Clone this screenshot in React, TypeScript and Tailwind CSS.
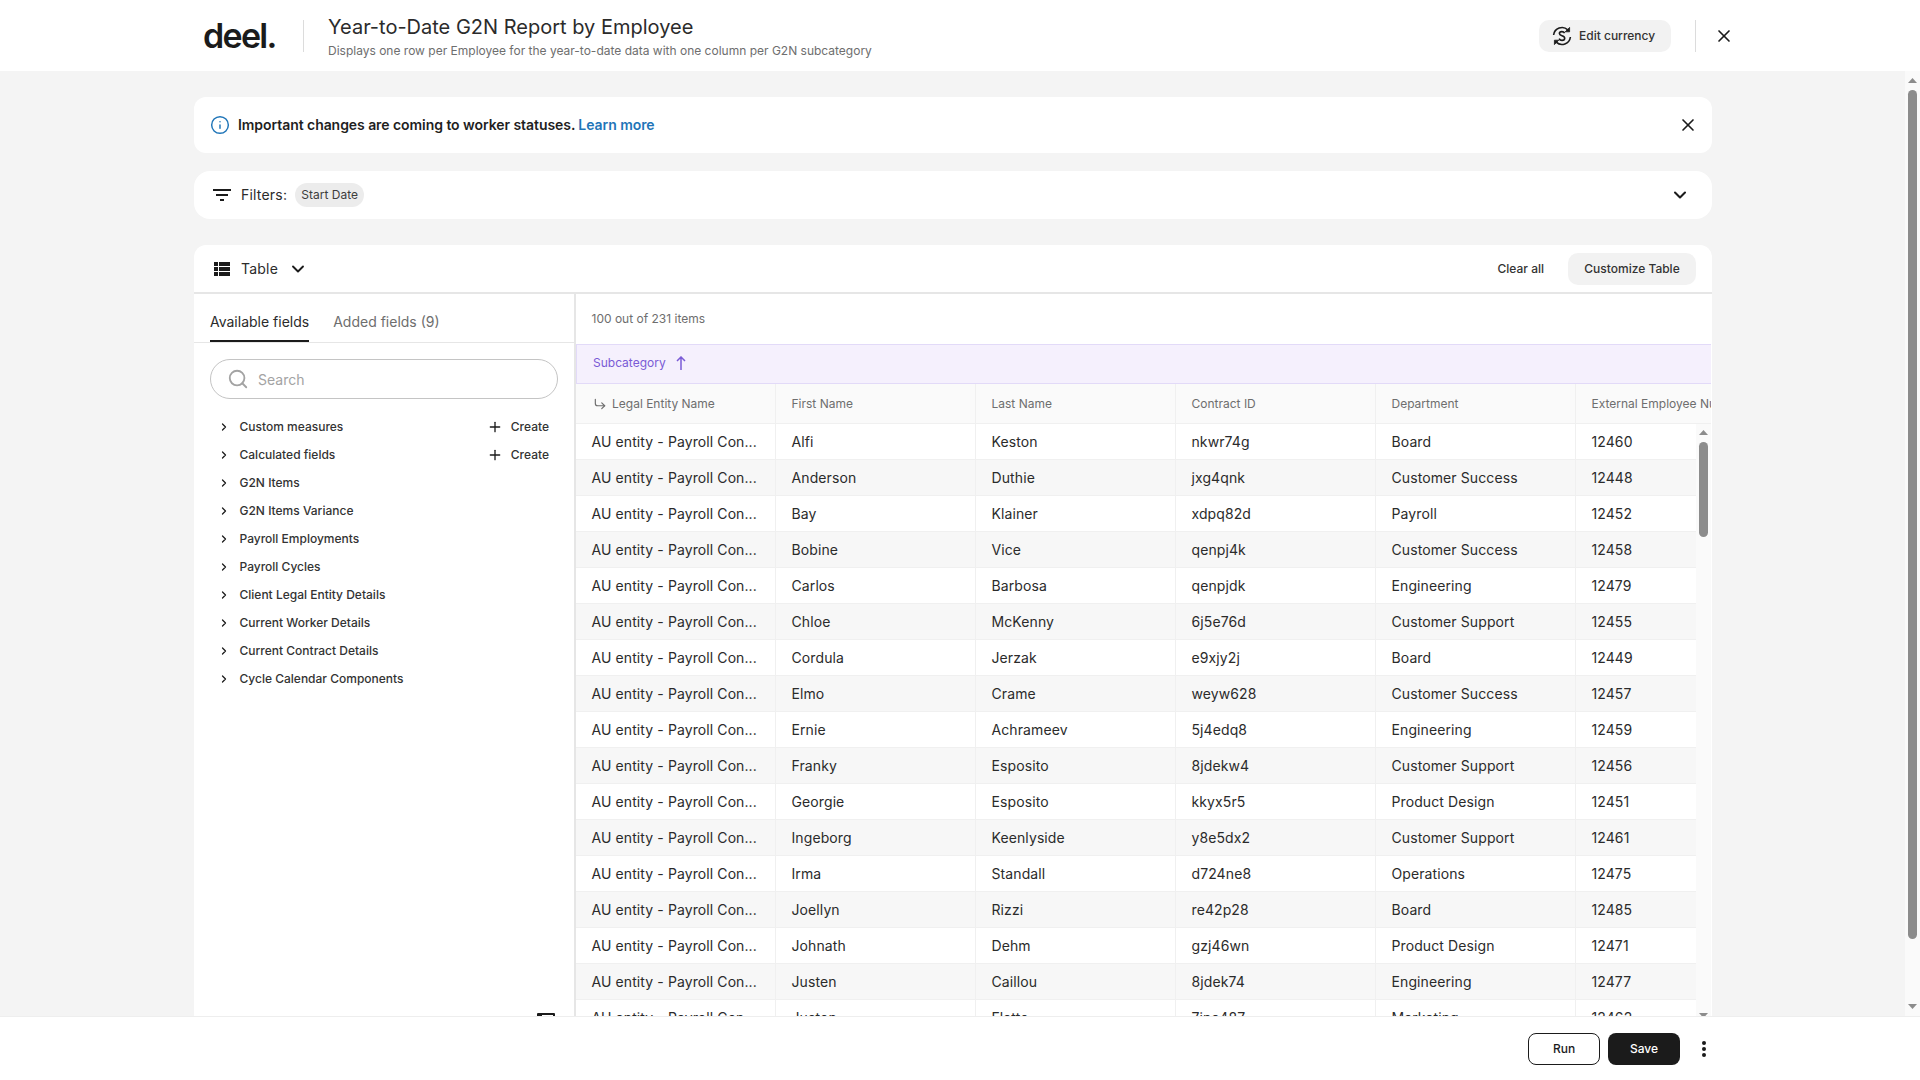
import React from "react";
import { ChevronDown, ChevronRight, CornerDownRight, Info, Plus, Search, X } from "lucide-react";

const columns = ["First Name", "Last Name", "Contract ID", "Department"];

// first name, last name, contract, department, external id
const rows = [
    ["Alfi", "Keston", "nkwr74g", "Board", "12460"],
    ["Anderson", "Duthie", "jxg4qnk", "Customer Success", "12448"],
    ["Bay", "Klainer", "xdpq82d", "Payroll", "12452"],
    ["Bobine", "Vice", "qenpj4k", "Customer Success", "12458"],
    ["Carlos", "Barbosa", "qenpjdk", "Engineering", "12479"],
    ["Chloe", "McKenny", "6j5e76d", "Customer Support", "12455"],
    ["Cordula", "Jerzak", "e9xjy2j", "Board", "12449"],
    ["Elmo", "Crame", "weyw628", "Customer Success", "12457"],
    ["Ernie", "Achrameev", "5j4edq8", "Engineering", "12459"],
    ["Franky", "Esposito", "8jdekw4", "Customer Support", "12456"],
    ["Georgie", "Esposito", "kkyx5r5", "Product Design", "12451"],
    ["Ingeborg", "Keenlyside", "y8e5dx2", "Customer Support", "12461"],
    ["Irma", "Standall", "d724ne8", "Operations", "12475"],
    ["Joellyn", "Rizzi", "re42p28", "Board", "12485"],
    ["Johnath", "Dehm", "gzj46wn", "Product Design", "12471"],
    ["Justen", "Caillou", "8jdek74", "Engineering", "12477"],
    ["Juston", "Flatto", "7jna487", "Marketing", "12462"],
];

const fields = [
    { name: "Custom measures", create: true },
    { name: "Calculated fields", create: true },
    { name: "G2N Items" },
    { name: "G2N Items Variance" },
    { name: "Payroll Employments" },
    { name: "Payroll Cycles" },
    { name: "Client Legal Entity Details" },
    { name: "Current Worker Details" },
    { name: "Current Contract Details" },
    { name: "Cycle Calendar Components" },
];

function ScrollUp() {
    return (
        <svg width="9" height="5" viewBox="0 0 9 5" className="shrink-0">
            <path d="M4.5 0 9 5H0z" fill="#8c8c8c" />
        </svg>
    );
}

function ScrollDown() {
    return (
        <svg width="9" height="5" viewBox="0 0 9 5" className="shrink-0">
            <path d="M0 0h9L4.5 5z" fill="#8c8c8c" />
        </svg>
    );
}

function CurrencyIcon() {
    return (
        <svg width="20" height="20" viewBox="0 0 20 20" fill="none" stroke="#1b1b1b" strokeWidth="1.6">
            <path d="M1.6 9A8.5 8.5 0 0 1 15.8 3.8" />
            <path d="M18.4 11A8.5 8.5 0 0 1 4.2 16.2" />
            <path d="M17.6 1.4v4.4h-4.4z" fill="#1b1b1b" strokeWidth="0.8" />
            <path d="M2.4 18.6v-4.4h4.4z" fill="#1b1b1b" strokeWidth="0.8" />
            <path d="M12.6 7.2c-.5-1.1-1.5-1.6-2.7-1.6-1.4 0-2.5.8-2.5 2 0 2.8 5.3 1.6 5.3 4.6 0 1.3-1.2 2.2-2.7 2.2-1.3 0-2.4-.6-2.9-1.8" />
        </svg>
    );
}

function FilterIcon() {
    return (
        <svg width="18" height="12" viewBox="0 0 18 12" fill="#1b1b1b">
            <rect x="0" y="0" width="18" height="2" />
            <rect x="3" y="5" width="12" height="2" />
            <rect x="7" y="10" width="4" height="2" />
        </svg>
    );
}

function TableIcon() {
    return (
        <svg width="16" height="14" viewBox="0 0 16 14" fill="#1b1b1b">
            <rect x="0" y="0" width="4" height="4" />
            <rect x="5" y="0" width="11" height="4" />
            <rect x="0" y="5" width="4" height="4" />
            <rect x="5" y="5" width="11" height="4" />
            <rect x="0" y="10" width="4" height="4" />
            <rect x="5" y="10" width="11" height="4" />
        </svg>
    );
}

function SortArrow() {
    return (
        <svg width="10" height="14" viewBox="0 0 10 14" fill="none" stroke="#7a5bd6" strokeWidth="1.5">
            <path d="M5 14V1M1 5l4-4 4 4" />
        </svg>
    );
}

function Sidebar() {
    return (
        <div className="flex w-[382px] shrink-0 flex-col border-r-2 border-[#e6e6e6]">
            {/* tabs */}
            <div className="flex h-[49px] gap-6 border-b border-[#e6e6e6] px-4 text-sm">
                <div className="flex items-end border-b-2 border-[#1b1b1b] pb-2 text-[#2b2b2b]">Available fields</div>
                <div className="flex items-end pb-[10px] text-[#6e6e6e]">Added fields (9)</div>
            </div>

            <div className="mx-4 mt-4 flex h-10 items-center gap-[9px] rounded-full border border-[#c4c4c4] pl-4">
                <Search size={22} color="#a3a3a3" strokeWidth={2} />
                <span className="pt-[1px] text-sm text-[#a3a3a3]">Search</span>
            </div>

            {/* field groups */}
            <div className="mx-4 mt-[14px] flex flex-col">
                {fields.map((field) => (
                    <div key={field.name} className="flex h-7 items-center pl-[8px] pr-[9px] text-xs font-[450] text-[#333333]">
                        <ChevronRight size={12} color="#1b1b1b" strokeWidth={2.5} />
                        <span className="ml-[9.5px]">{field.name}</span>
                        {field.create && (
                            <div className="ml-auto flex items-center gap-2">
                                <Plus size={16} color="#1b1b1b" strokeWidth={2} />
                                <span>Create</span>
                            </div>
                        )}
                    </div>
                ))}
            </div>

            {/* collapse button, mostly cut off by the footer */}
            <div className="mb-[5px] ml-auto mr-[19px] mt-auto h-[18px] w-[18px] rounded-[1px] border-2 border-l-[5px] border-[#1b1b1b]" />
        </div>
    );
}

function ReportTable() {
    return (
        <div className="mr-[1px] min-w-0 flex-1">
            <div className="flex h-[50px] items-center pl-[15.5px] text-xs text-[#6e6e6e]">100 out of 231 items</div>

            <div className="flex h-10 items-center gap-[10px] border border-r-0 border-[#e2daf8] bg-[#f5f0fd] pb-[2px] pl-[16px] text-xs text-[#7a5bd6]">
                Subcategory
                <SortArrow />
            </div>

            <div className="flex h-10 border-b border-[#f0f0f0] bg-[#fafafa] text-xs text-[#6e6e6e]">
                <div className="flex w-[200px] shrink-0 items-center gap-[5px] border-r border-[#f0f0f0] pl-[17px]">
                    <CornerDownRight size={14} color="#6e6e6e" strokeWidth={2} />
                    Legal Entity Name
                </div>
                {columns.map((col) => (
                    <div key={col} className="flex w-[200px] shrink-0 items-center border-r border-[#f0f0f0] pl-[15.5px]">
                        {col}
                    </div>
                ))}
                <div className="flex min-w-0 flex-1 items-center overflow-hidden whitespace-nowrap pl-[15.5px]">External Employee Number</div>
            </div>

            <div className="flex">
                <div className="min-w-0 flex-1">
                    {rows.map((row, idx) => (
                        <div
                            key={row[0] + row[1]}
                            className={
                                idx % 2 === 1
                                    ? "flex h-9 border-b border-[#f0f0f0] bg-[#f7f7f7] text-sm tracking-[0.1px] text-[#2b2b2b]"
                                    : "flex h-9 border-b border-[#f0f0f0] bg-white text-sm tracking-[0.1px] text-[#2b2b2b]"
                            }
                        >
                            <div className="flex w-[200px] shrink-0 items-center border-r border-[#f0f0f0] pl-[15.5px]">AU entity - Payroll Con...</div>
                            {row.slice(0, 4).map((cell, i) => (
                                <div key={i} className="flex w-[200px] shrink-0 items-center border-r border-[#f0f0f0] pl-[15.5px]">
                                    {cell}
                                </div>
                            ))}
                            <div className="flex min-w-0 flex-1 items-center pl-[15.5px]">{row[4]}</div>
                        </div>
                    ))}
                </div>

                {/* inner scrollbar */}
                <div className="flex w-[15px] shrink-0 flex-col items-center bg-[#fafafa] pt-[6px]">
                    <ScrollUp />
                    <div className="mt-[7px] h-[95px] w-[9px] rounded-full bg-[#8c8c8c]" />
                    <div className="mt-[476px]">
                        <ScrollDown />
                    </div>
                </div>
            </div>
        </div>
    );
}

export default function App() {
    return (
        <div className="flex h-screen flex-col overflow-hidden bg-[#f4f4f4] font-[Inter,sans-serif] text-[#1b1b1b]">
            {/* top bar */}
            <div className="flex h-[71px] shrink-0 items-center bg-white pl-[203px] pr-[186px]">
                <span className="w-[72px] whitespace-nowrap text-[34px] font-semibold leading-none tracking-[-0.05em] text-[#1b1b1b]">deel.</span>
                <div className="ml-7 h-8 w-px bg-[#dcdcdc]" />
                <div className="ml-6 pt-[3px]">
                    <div className="text-xl leading-6 text-[#2b2b2b]">Year-to-Date G2N Report by Employee</div>
                    <div className="mt-[3.5px] text-xs leading-4 text-[#6e6e6e]">Displays one row per Employee for the year-to-date data with one column per G2N subcategory</div>
                </div>
                <div className="ml-auto flex h-8 w-[132px] items-center gap-[7px] rounded-[10px] bg-[#f2f2f2] pl-[13px] text-xs font-[450] text-[#333333]">
                    <CurrencyIcon />
                    Edit currency
                </div>
                <div className="ml-6 h-8 w-px bg-[#dcdcdc]" />
                <X className="ml-[18px]" size={20} color="#1b1b1b" strokeWidth={2} />
            </div>

            <div className="flex min-h-0 flex-1">
                <div className="min-w-0 flex-1 overflow-hidden pl-[194px] pr-[193px] pt-[26px]">
                    <div className="flex h-14 items-center rounded-xl bg-white pl-4 pr-[14px]">
                        <Info size={20} color="#1f75b8" strokeWidth={1.75} />
                        <span className="ml-2 text-sm font-semibold tracking-[-0.06px] text-[#1f1f1f]">Important changes are coming to worker statuses.</span>
                        <span className="ml-[3px] text-sm font-semibold tracking-[-0.06px] text-[#1f75b8]">Learn more</span>
                        <X className="ml-auto" size={20} color="#1b1b1b" strokeWidth={2} />
                    </div>

                    <div className="mt-[18px] flex h-12 items-center rounded-2xl bg-white pl-[19px] pr-[22px]">
                        <FilterIcon />
                        <span className="ml-[10px] text-sm tracking-[0.2px] text-[#2b2b2b]">Filters:</span>
                        <span className="ml-2 flex h-6 w-[69px] items-center justify-center rounded-full bg-[#ececec] text-xs text-[#3d3d3d]">Start Date</span>
                        <ChevronDown className="ml-auto" size={20} color="#1b1b1b" strokeWidth={2.5} />
                    </div>

                    <div className="mt-[26px] rounded-t-xl bg-white">
                        <div className="flex h-[49px] items-center border-b-2 border-[#e6e6e6] pl-5 pr-4">
                            <TableIcon />
                            <span className="ml-[11px] text-sm tracking-[0.2px] text-[#2b2b2b]">Table</span>
                            <ChevronDown className="ml-[10px]" size={20} color="#1b1b1b" strokeWidth={2.25} />
                            <span className="ml-auto text-xs font-[450] text-[#333333]">Clear all</span>
                            <div className="ml-6 flex h-8 w-32 items-center justify-center rounded-[10px] bg-[#f2f2f2] text-xs font-[450] text-[#333333]">Customize Table</div>
                        </div>
                        <div className="flex">
                            <Sidebar />
                            <ReportTable />
                        </div>
                    </div>
                </div>

                {/* page scrollbar */}
                <div className="flex w-[15px] shrink-0 flex-col items-center bg-[#fafafa] pt-[7px]">
                    <ScrollUp />
                    <div className="mt-[7px] h-[849px] w-[9px] rounded-full bg-[#8c8c8c]" />
                    <div className="mt-[65px]">
                        <ScrollDown />
                    </div>
                </div>
            </div>

            {/* footer */}
            <div className="flex h-16 shrink-0 items-center justify-end gap-2 border-t border-[#eeeeee] bg-white pr-[213px]">
                <div className="flex h-8 w-[72px] items-center justify-center rounded-lg border border-[#1b1b1b] text-xs font-[450] text-[#1b1b1b]">Run</div>
                <div className="flex h-8 w-[72px] items-center justify-center rounded-lg bg-[#1b1b1b] text-xs font-[450] text-white">Save</div>
                <svg className="ml-[13px]" width="6" height="16" viewBox="0 0 6 16" fill="#1b1b1b">
                    <circle cx="3" cy="2" r="2" />
                    <circle cx="3" cy="8" r="2" />
                    <circle cx="3" cy="14" r="2" />
                </svg>
            </div>
        </div>
    );
}
